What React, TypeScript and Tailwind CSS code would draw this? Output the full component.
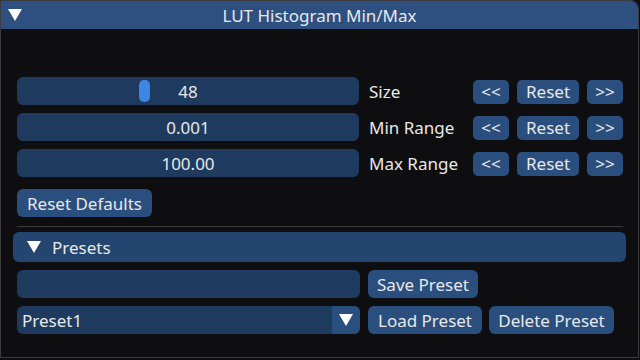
import React from "react";

const Tri = ({ cls }: { cls: string }) => (
  <svg width="14" height="12" viewBox="0 0 14 12" className={cls}>
    <polygon points="0,0 14,0 7,12" fill="#ffffff" />
  </svg>
);

const Btn = ({ children, w }: { children: React.ReactNode; w: string }) => (
  <div className={`h-[24px] ${w} rounded-[5px] bg-[#2a4f7f] flex items-center justify-center text-[#e8e8e8] leading-none`}>
    {children}
  </div>
);

const Row = ({ value, label, grab }: { value: string; label: string; grab?: boolean }) => (
  <div className="flex items-center h-[28px]">
    <div className="relative w-[342px] h-[28px] rounded-[6px] bg-[#1e3a5e] flex items-center justify-center text-[#e8e8e8]">
      {grab && <div className="absolute left-[122px] top-[3px] w-[11px] h-[22px] rounded-[5px] bg-[#3d86e3]" />}
      <span>{value}</span>
    </div>
    <div className="ml-[10px] w-[104px] text-[#e8e8e8]">{label}</div>
    <div className="flex items-center gap-[8px] mt-[1px]">
      <Btn w="w-[36px]">&lt;&lt;</Btn>
      <Btn w="w-[62px]">Reset</Btn>
      <Btn w="w-[36px]">&gt;&gt;</Btn>
    </div>
  </div>
);

export default function App() {
  return (
    <div
      className="w-[640px] h-[360px] bg-[#0e0e10] overflow-hidden text-[17px] leading-none"
      style={{ fontFamily: '"Noto Sans", "Open Sans", sans-serif' }}
    >
      <div className="w-[639px] h-[358px] border border-[#3b3b40] rounded-tr-[8px] flex flex-col bg-[#0e0e10]">
        <div className="h-[28px] bg-[#2d5081] rounded-tr-[8px] relative flex items-center justify-center text-[#e8e8e8] text-[17px]">
          <Tri cls="absolute left-[7px] top-[8px]" />
          <span>LUT Histogram Min/Max</span>
        </div>
        <div className="flex flex-col pl-[16px] pt-[48px]">
          <div className="flex flex-col gap-[8px]">
            <Row value="48" label="Size" grab />
            <Row value="0.001" label="Min Range" />
            <Row value="100.00" label="Max Range" />
          </div>
          <div className="mt-[12px] h-[28px] w-[135px] rounded-[6px] bg-[#2a4f7f] flex items-center justify-center text-[#e8e8e8]">
            Reset Defaults
          </div>
          <div className="mt-[9px] h-[1px] w-[606px] bg-[#3b3b40]" />
        </div>
        <div className="ml-[12px] mt-[5px] w-[613px] h-[30px] rounded-[6px] bg-[#234570] flex items-center text-[#e8e8e8]">
          <Tri cls="ml-[14px]" />
          <span className="ml-[11px]">Presets</span>
        </div>
        <div className="flex flex-col pl-[16px] mt-[8px] gap-[8px]">
          <div className="flex items-center h-[28px]">
            <div className="w-[343px] h-[28px] rounded-[6px] bg-[#1e3a5e]" />
            <div className="ml-[8px] h-[28px] w-[110px] rounded-[6px] bg-[#2a4f7f] flex items-center justify-center text-[#e8e8e8]">
              Save Preset
            </div>
          </div>
          <div className="flex items-center h-[28px]">
            <div className="w-[343px] h-[28px] rounded-[6px] bg-[#1e3a5e] flex items-center text-[#e8e8e8] overflow-hidden">
              <span className="ml-[5px] flex-1">Preset1</span>
              <div className="w-[28px] h-[28px] bg-[#2a4f7f] flex items-center justify-center">
                <Tri cls="" />
              </div>
            </div>
            <div className="ml-[8px] h-[28px] w-[114px] rounded-[6px] bg-[#2a4f7f] flex items-center justify-center text-[#e8e8e8]">
              Load Preset
            </div>
            <div className="ml-[7px] h-[28px] w-[125px] rounded-[6px] bg-[#2a4f7f] flex items-center justify-center text-[#e8e8e8]">
              Delete Preset
            </div>
          </div>
        </div>
      </div>
    </div>
  );
}
